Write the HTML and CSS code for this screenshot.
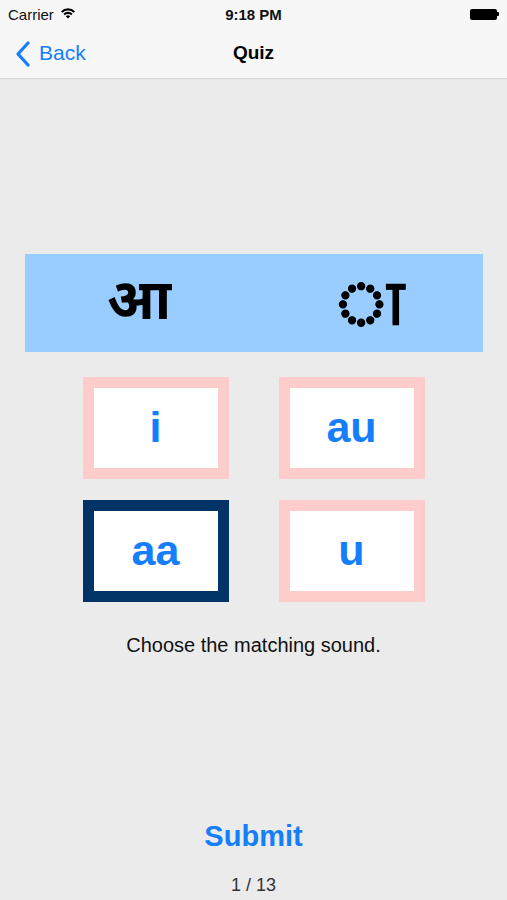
FILE: index.html
```html
<!DOCTYPE html>
<html>
<head>
<meta charset="utf-8">
<link rel="stylesheet" href="styles.css">
</head>
<body>
<div class="screen">
  <div class="status">
    <div class="status-left">
      <span class="carrier">Carrier</span>
      <svg class="wifi" width="16" height="12" viewBox="0 0 16 12">
        <path d="M1 4.2 A10 10 0 0 1 15 4.2 L13.6 5.7 A8 8 0 0 0 2.4 5.7 Z" fill="#000"/>
        <path d="M3.4 6.7 A6.6 6.6 0 0 1 12.6 6.7 L11.2 8.2 A4.6 4.6 0 0 0 4.8 8.2 Z" fill="#000"/>
        <path d="M5.8 9.2 A3.2 3.2 0 0 1 10.2 9.2 L8 11.5 Z" fill="#000"/>
      </svg>
    </div>
    <div class="time">9:18 PM</div>
    <div class="status-right">
      <div class="battery"></div>
      <div class="battery-nub"></div>
    </div>
  </div>
  <div class="navbar">
    <div class="back">
      <svg class="chevron" width="16" height="26" viewBox="0 0 16 26">
        <path d="M13 2 L3 13 L13 24" fill="none" stroke="#157efb" stroke-width="3.2" stroke-linecap="round" stroke-linejoin="round"/>
      </svg>
      <span>Back</span>
    </div>
    <div class="title">Quiz</div>
  </div>
  <main class="content">
    <div class="banner">
      <div class="glyph">आ</div>
      <div class="glyph matra">◌ा</div>
    </div>
    <div class="grid">
      <div class="card">i</div>
      <div class="card">au</div>
      <div class="card selected">aa</div>
      <div class="card">u</div>
    </div>
    <p class="prompt">Choose the matching sound.</p>
    <div class="spacer"></div>
    <div class="submit">Submit</div>
    <div class="progress">1 / 13</div>
  </main>
</div>
</body>
</html>
```

FILE: styles.css
```css
* { box-sizing: border-box; }
html, body { margin: 0; padding: 0; }
body {
  width: 507px;
  height: 900px;
  background: #ebebeb;
  font-family: "Liberation Sans", Arial, sans-serif;
  overflow: hidden;
}
.screen {
  display: flex;
  flex-direction: column;
  height: 900px;
}
.status {
  height: 28px;
  background: #f7f7f7;
  display: flex;
  align-items: center;
  justify-content: space-between;
  padding: 0 8px 0 8px;
  position: relative;
}
.status-left {
  display: flex;
  align-items: center;
  gap: 6px;
  font-size: 15px;
  color: #111;
}
.wifi { margin-top: -2px; }
.time {
  position: absolute;
  left: 0;
  right: 0;
  text-align: center;
  font-size: 15px;
  font-weight: bold;
  color: #111;
}
.status-right {
  display: flex;
  align-items: center;
}
.battery {
  width: 27px;
  height: 11px;
  background: #000;
  border-radius: 2px;
}
.battery-nub {
  width: 2px;
  height: 4px;
  background: #000;
  border-radius: 0 1px 1px 0;
}
.navbar {
  height: 51px;
  background: #f7f7f7;
  border-bottom: 1px solid #d6d6d6;
  display: flex;
  align-items: center;
  position: relative;
}
.back {
  display: flex;
  align-items: center;
  gap: 8px;
  padding-left: 15px;
  color: #157efb;
  font-size: 21px;
}
.chevron { margin-top: 1px; }
.title {
  position: absolute;
  left: 0;
  right: 0;
  text-align: center;
  font-size: 19px;
  font-weight: bold;
  color: #000;
  pointer-events: none;
}
.content {
  flex: 1;
  display: flex;
  flex-direction: column;
  align-items: center;
  padding-top: 175px;
}
.banner {
  width: 458px;
  height: 98px;
  background: #99ccff;
  display: grid;
  grid-template-columns: 1fr 1fr;
  align-items: center;
  padding-top: 6px;
}
.glyph {
  text-align: center;
  font-family: "Noto Sans Devanagari", "Lohit Devanagari", "Noto Sans", "FreeSans", sans-serif;
  font-size: 56px;
  font-weight: bold;
  color: #000;
  line-height: 1;
}
.glyph.matra {
  font-family: "Lohit Devanagari", "Noto Sans Devanagari", sans-serif;
  font-size: 60px;
  -webkit-text-stroke: 0.8px #000;
  padding-left: 2px;
}
.grid {
  margin-top: 25px;
  display: grid;
  grid-template-columns: 146px 146px;
  grid-auto-rows: 102px;
  column-gap: 50px;
  row-gap: 21px;
}
.card {
  background: #fff;
  border: 11px solid #ffcccc;
  display: flex;
  align-items: center;
  justify-content: center;
  color: #157efb;
  font-size: 43px;
  font-weight: bold;
  padding-bottom: 2px;
}
.card.selected { border-color: #003366; }
.prompt {
  margin: 32px 0 0 0;
  font-size: 20px;
  color: #111;
}
.spacer { flex: 1; }
.submit {
  color: #157efb;
  font-size: 29px;
  font-weight: bold;
}
.progress {
  margin-top: 22px;
  margin-bottom: 4px;
  font-size: 18px;
  color: #333;
}
```
